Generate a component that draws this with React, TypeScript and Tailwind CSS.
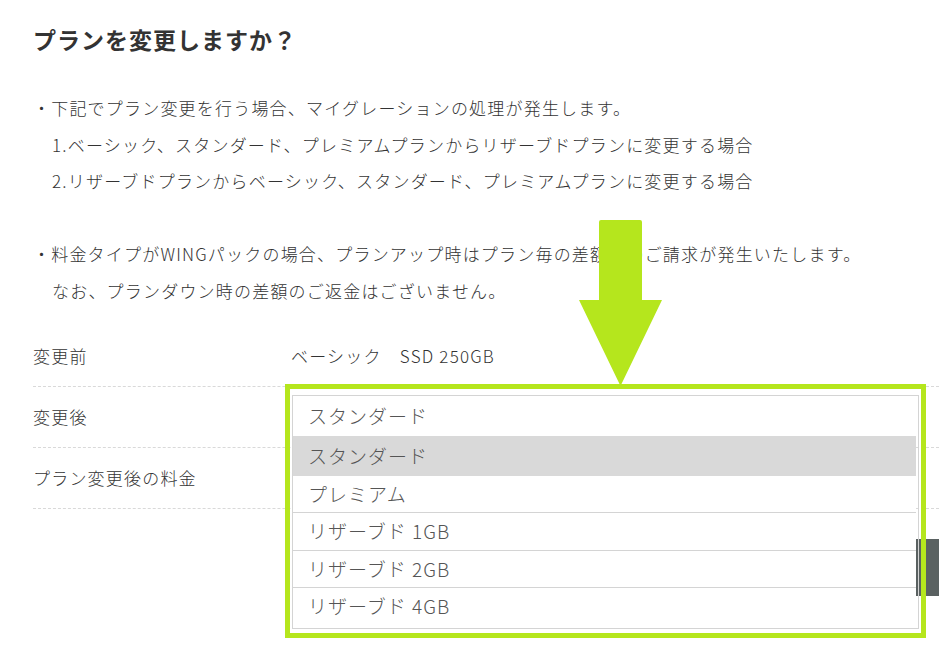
import React from "react";

const FONT = { fontFamily: '"Noto Sans CJK JP", "Noto Sans", sans-serif' };

const OPTIONS = [
  { label: "スタンダード", h: "h-[40px]", active: false, line: false },
  { label: "スタンダード", h: "h-[40px]", active: true, line: false },
  { label: "プレミアム", h: "h-[37px]", active: false, line: true },
  { label: "リザーブド 1GB", h: "h-[38px]", active: false, line: true },
  { label: "リザーブド 2GB", h: "h-[37px]", active: false, line: true },
  { label: "リザーブド 4GB", h: "h-[37px]", active: false, line: false },
];

function Row({ label, value }: { label: string; value?: string }) {
  return (
    <div className="flex items-center h-[61px] border-b border-dashed border-[#d9d9d9]">
      <div className="w-[258px] shrink-0">{label}</div>
      <div>{value}</div>
    </div>
  );
}

function DownArrow() {
  return (
    <svg
      className="absolute left-[579px] top-[220px]"
      width="83"
      height="166"
      viewBox="0 0 83 166"
    >
      <path d="M22 0 H61 Q63 0 63 2 V80 H83 L41.5 166 L0 80 H20 V2 Q20 0 22 0 Z" fill="#b5e61d" />
    </svg>
  );
}

export default function App() {
  return (
    <div
      className="relative w-[939px] h-[651px] overflow-hidden bg-white text-[#333333] font-light pl-[33px] pt-[23px]"
      style={FONT}
    >
      <h1 className="text-[23px] leading-[32px] font-bold tracking-[1px]">プランを変更しますか？</h1>

      {/* notes */}
      <div className="mt-[35px] text-[17px] leading-[36.5px] tracking-[1.2px]">
        <div>・下記でプラン変更を行う場合、マイグレーションの処理が発生します。</div>
        <div className="pl-[19px]">1.ベーシック、スタンダード、プレミアムプランからリザーブドプランに変更する場合</div>
        <div className="pl-[19px]">2.リザーブドプランからベーシック、スタンダード、プレミアムプランに変更する場合</div>
        <div className="h-[36.5px]" />
        <div>・料金タイプがWINGパックの場合、プランアップ時はプラン毎の差額分のご請求が発生いたします。</div>
        <div className="pl-[19px]">なお、プランダウン時の差額のご返金はございません。</div>
      </div>

      {/* plan table */}
      <div className="mt-[17px] text-[17px] tracking-[1.2px]">
        <Row label="変更前" value="ベーシック　SSD 250GB" />
        <Row label="変更後" />
        <Row label="プラン変更後の料金" />
      </div>

      {/* side tab at right edge */}
      <div className="absolute right-0 top-[539px] w-[23px] h-[57px] bg-[#5a6161]" />

      {/* opened select list */}
      <div className="absolute left-[292px] top-[395px] w-[627px] h-[234px] border border-[#d4d4d4] text-[19px] tracking-[1px] text-[#555555]">
        {OPTIONS.map((o, i) => (
          <div
            key={i}
            className={`${o.h} mr-[2px] flex items-center pl-[15px] ${o.active ? "bg-[#d9d9d9]" : "bg-white"} ${o.line ? "border-b border-[#d4d4d4]" : ""}`}
          >
            {o.label}
          </div>
        ))}
      </div>

      {/* annotation frame + arrow */}
      <div className="absolute left-[285px] top-[384px] w-[641px] h-[254px] border-[5px] border-[#b5e61d]" />
      <DownArrow />
    </div>
  );
}
